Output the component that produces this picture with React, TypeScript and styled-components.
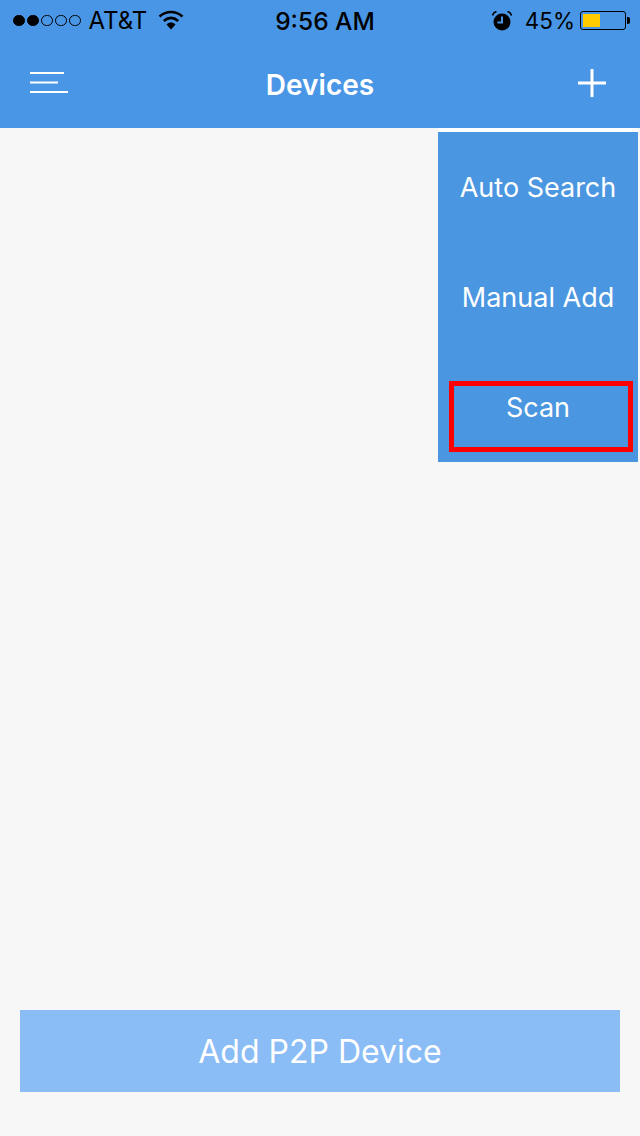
import React from 'react';
import styled, { createGlobalStyle } from 'styled-components';

const GlobalStyle = createGlobalStyle`
  html, body {
    margin: 0;
    padding: 0;
    background: #f7f7f7;
  }
  * {
    box-sizing: border-box;
  }
`;

const Page = styled.div`
  width: 640px;
  height: 1136px;
  display: flex;
  flex-direction: column;
  overflow: hidden;
  background: #f7f7f7;
  font-family: Inter, "Liberation Sans", sans-serif;
`;

const Header = styled.header`
  height: 128px;
  flex: none;
  background: #4a96e6;
`;

const StatusBar = styled.div`
  height: 40px;
  padding: 0 11px 0 13px;
  display: grid;
  grid-template-columns: 1fr auto 1fr;
  align-items: center;
  color: #000;
`;

const StatusGroup = styled.div<{ $end?: boolean }>`
  display: flex;
  align-items: center;
  justify-content: ${p => (p.$end ? 'flex-end' : 'flex-start')};
`;

const Signal = styled.div`
  display: flex;
  gap: 2.5px;
  margin-right: 8px;
`;

const Dot = styled.span<{ $on: boolean }>`
  width: 11.5px;
  height: 11.5px;
  border-radius: 50%;
  border: 1px solid #000;
  background: ${p => (p.$on ? '#000' : 'transparent')};
`;

const StatusText = styled.span<{ $size: number }>`
  font-size: ${p => p.$size}px;
  font-weight: 400;
  line-height: 40px;
  padding-top: 1px;
`;

const Clock = styled.span`
  font-size: 24.5px;
  font-weight: 500;
  line-height: 40px;
  padding-top: 1px;
  margin-left: 8px;
`;

const WifiIcon = styled.svg`
  width: 26px;
  height: 20px;
  margin-left: 11px;
  margin-top: -2px;
`;

const AlarmIcon = styled.svg`
  width: 20px;
  height: 20px;
  margin-right: 13px;
`;

const Battery = styled.div`
  position: relative;
  width: 46px;
  height: 19px;
  margin-left: 5px;
  margin-right: 3px;
  padding: 2px;
  border: 1px solid #000;
  border-radius: 3px;
  &::after {
    content: '';
    position: absolute;
    right: -5px;
    top: 5px;
    width: 3px;
    height: 7px;
    background: #000;
    border-radius: 0 2px 2px 0;
  }
`;

const BatteryLevel = styled.div`
  height: 100%;
  background: #ffcc00;
`;

const NavBar = styled.nav`
  height: 88px;
  padding: 0 34px 0 30px;
  display: grid;
  grid-template-columns: 1fr auto 1fr;
  align-items: center;
`;

const Burger = styled.svg`
  width: 38px;
  height: 22px;
  margin-top: -2px;
`;

const Title = styled.h1`
  margin: 1px 0 0 4px;
  font-size: 28px;
  font-weight: 600;
  color: #fff;
`;

const PlusIcon = styled.svg`
  width: 28px;
  height: 28px;
  margin-top: -3px;
  justify-self: end;
`;

const Content = styled.main`
  flex: 1;
  position: relative;
  display: flex;
  flex-direction: column;
  justify-content: flex-end;
  padding: 0 20px 44px;
`;

const Menu = styled.ul`
  position: absolute;
  top: 0;
  right: 2px;
  width: 200px;
  margin: 0;
  padding: 0;
  list-style: none;
  border-top: 4px solid #fff;
  background: #4a96e0;
`;

const MenuItem = styled.li`
  position: relative;
  height: 110px;
  display: flex;
  align-items: center;
  justify-content: center;
  font-size: 27px;
  color: #fff;
`;

const Highlight = styled.span`
  position: absolute;
  left: 11px;
  right: 5px;
  top: 29px;
  height: 71px;
  border: 5px solid #fe0000;
`;

const AddButton = styled.button`
  height: 82px;
  width: 100%;
  border: 0;
  padding: 0;
  background: #8abcf5;
  color: #fff;
  font-family: inherit;
  font-size: 32px;
  font-weight: 400;
`;

export default function App() {
  return (
    <Page>
      <GlobalStyle />
      <Header>
        <StatusBar>
          <StatusGroup>
            <Signal>
              {[true, true, false, false, false].map((on, i) => (
                <Dot key={i} $on={on} />
              ))}
            </Signal>
            <StatusText $size={24}>AT&amp;T</StatusText>
            <WifiIcon viewBox="0 0 26 20">
              <path d="M1.5 6.5C8.5 0.5 17.5 0.5 24.5 6.5" fill="none" stroke="#000" strokeWidth="2.6" />
              <path d="M5.8 11C10.5 7 15.5 7 20.2 11" fill="none" stroke="#000" strokeWidth="2.6" />
              <path d="M8.5 14.4C11.5 11.8 14.5 11.8 17.5 14.4L13 19.5Z" fill="#000" />
            </WifiIcon>
          </StatusGroup>
          <Clock>9:56 AM</Clock>
          <StatusGroup $end>
            <AlarmIcon viewBox="0 0 20 20">
              <circle cx="10" cy="11" r="8.5" fill="#000" />
              <path d="M10 5.5V11.5H5.5" fill="none" stroke="#4a96e6" strokeWidth="2" />
              <path d="M0.5 4.5C1 2.5 2.5 1 4.5 0.5M15.5 0.5C17.5 1 19 2.5 19.5 4.5" fill="none" stroke="#000" strokeWidth="1.5" />
            </AlarmIcon>
            <StatusText $size={22.5}>45%</StatusText>
            <Battery>
              <BatteryLevel style={{ width: '43%' }} />
            </Battery>
          </StatusGroup>
        </StatusBar>
        <NavBar>
          <Burger viewBox="0 0 38 22">
            <path d="M0 1H34M0 10.5H28M0 20H38" stroke="#fff" strokeWidth="2" />
          </Burger>
          <Title>Devices</Title>
          <PlusIcon viewBox="0 0 28 28">
            <path d="M14 0V28M0 14H28" stroke="#fff" strokeWidth="3" />
          </PlusIcon>
        </NavBar>
      </Header>
      <Content>
        <Menu>
          <MenuItem>Auto Search</MenuItem>
          <MenuItem>Manual Add</MenuItem>
          <MenuItem>
            Scan
            <Highlight />
          </MenuItem>
        </Menu>
        <AddButton>Add P2P Device</AddButton>
      </Content>
    </Page>
  );
}
